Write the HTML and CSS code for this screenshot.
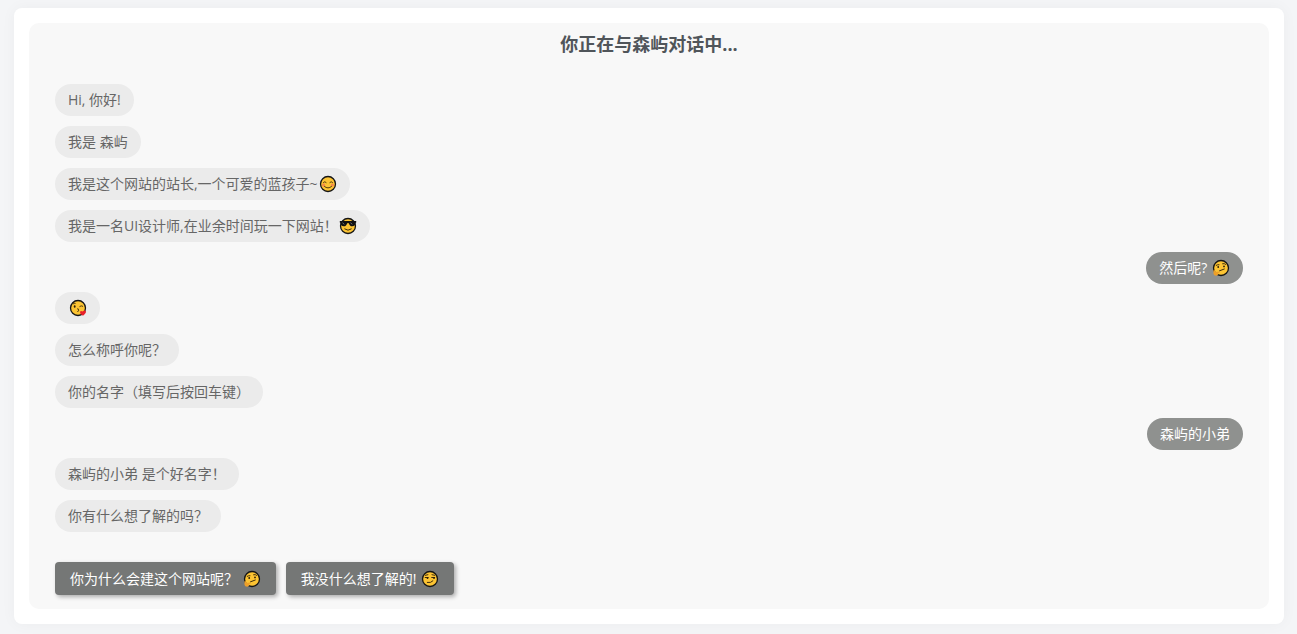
FILE: index.html
```html
<!DOCTYPE html>
<html lang="zh-CN">
<head>
<meta charset="utf-8">
<meta name="viewport" content="width=device-width, initial-scale=1">
<title>你正在与森屿对话中...</title>
<link rel="stylesheet" href="styles.css">
</head>
<body>
<svg class="sprite" aria-hidden="true">
  <symbol id="face" viewBox="0 0 18 18">
    <circle cx="9" cy="9" r="7.5" fill="#fcc433" stroke="#151515" stroke-width="1.3"/>
  </symbol>
  <symbol id="smile" viewBox="0 0 18 18">
    <use href="#face"/>
    <circle cx="4.6" cy="10" r="1.6" fill="#f7894a"/><circle cx="13.4" cy="10" r="1.6" fill="#f7894a"/>
    <path d="M4.4 7.5q1.4-1.8 2.8 0M10.8 7.5q1.4-1.8 2.8 0M5.5 11.5q3.5 3 7 0" fill="none" stroke="#3d2c0c" stroke-width=".9" stroke-linecap="round"/>
  </symbol>
  <symbol id="cool" viewBox="0 0 18 18">
    <use href="#face"/>
    <path d="M.8 4h16.4v1.6l-.8.4q-.2 3.3-3.2 3.3-2.7 0-3.3-3.1H8.1q-.6 3.1-3.3 3.1-3 0-3.2-3.3l-.8-.4z" fill="#111"/>
    <path d="M3.5 5.8l1.8 1.5M11.5 5.8l1.8 1.5" stroke="#888" stroke-width=".8"/>
    <path d="M5.7 12q3.3 2.6 6.6 0" fill="none" stroke="#3d2c0c" stroke-linecap="round"/>
  </symbol>
  <symbol id="think" viewBox="0 0 18 18">
    <use href="#face"/>
    <path d="M4.2 6.3q1.2-.8 2.8-.6M10.600 4.700q1.800-.6 3 .6M7.500 11.800l4.800-1.800" fill="none" stroke="#3d2c0c" stroke-linecap="round"/>
    <circle cx="6.2" cy="8" r=".9" fill="#2b1d08"/><circle cx="12" cy="7.4" r=".9" fill="#2b1d08"/>
    <path d="M1.5 11.3q1-.8 1.500.6l.6 1.100 3.600-.5q1 .2.4 1l-1.300.6q.2 2.400-1.900 2.600-2.500.1-2.900-1.900z" fill="#ee9f28"/>
  </symbol>
  <symbol id="kiss" viewBox="0 0 18 18">
    <use href="#face"/>
    <path d="M4.2 4.8q1-.8 2-.5M10.8 7.4q1.4-1.200 2.900-.2M8.500 9.800q2 .1.800 1.200 1.500.8-.6 1.500" fill="none" stroke="#3d2c0c" stroke-width=".9" stroke-linecap="round"/>
    <ellipse cx="5.7" cy="7.5" rx=".9" ry="1.2" fill="#2b1d08"/>
    <path d="M14 16.800q-3.300-1.800-3-3.700.6-1.800 2.500-.6 2-2 3.300-.4 1 1.800-2.800 4.700z" fill="#e8202a"/>
  </symbol>
  <symbol id="smirk" viewBox="0 0 18 18">
    <use href="#face"/>
    <path d="M4.3 5.3l2.6-.6M11 4.7l2.7.6M4.2 7.5h3M10.7 7.5h3M6.3 12.5q3.5.8 5.6-1.6" fill="none" stroke="#3d2c0c" stroke-linecap="round"/>
    <circle cx="6.5" cy="8" r=".9" fill="#2b1d08"/><circle cx="13" cy="8" r=".9" fill="#2b1d08"/>
  </symbol>
</svg>
<main class="card">
  <section class="chat">
    <h1 class="title">你正在与森屿对话中...</h1>
    <div class="messages">
      <div class="group">
        <p class="bubble">Hi, 你好!</p>
        <p class="bubble">我是 森屿</p>
        <p class="bubble">我是这个网站的站长,一个可爱的蓝孩子~<svg class="emoji" role="img" aria-label="微笑"><use href="#smile"/></svg></p>
        <p class="bubble">我是一名UI设计师,在业余时间玩一下网站！<svg class="emoji" role="img" aria-label="墨镜"><use href="#cool"/></svg></p>
        <p class="bubble reply">然后呢? <svg class="emoji" role="img" aria-label="思考"><use href="#think"/></svg></p>
      </div>
      <div class="group">
        <p class="bubble"><svg class="emoji" role="img" aria-label="飞吻"><use href="#kiss"/></svg></p>
        <p class="bubble">怎么称呼你呢？</p>
        <p class="bubble">你的名字（填写后按回车键）</p>
        <p class="bubble reply">森屿的小弟</p>
      </div>
      <div class="group">
        <p class="bubble">森屿的小弟 是个好名字！</p>
        <p class="bubble">你有什么想了解的吗？</p>
      </div>
    </div>
    <div class="choices">
      <button class="choice" type="button">你为什么会建这个网站呢？ <svg class="emoji" role="img" aria-label="思考"><use href="#think"/></svg></button>
      <button class="choice" type="button">我没什么想了解的! <svg class="emoji" role="img" aria-label="得意"><use href="#smirk"/></svg></button>
    </div>
  </section>
</main>
</body>
</html>
```
FILE: styles.css
```css
* {
  box-sizing: border-box;
}

body {
  margin: 0;
  padding: 8px 13px 10px 14px;
  background: #f4f5f7;
  color: #666;
  font: 400 14px/20px "Open Sans", "Noto Sans CJK SC", sans-serif;
}

.sprite {
  position: absolute;
  width: 0;
  height: 0;
}

.card {
  padding: 15px;
  border-radius: 8px;
  background: #fff;
  box-shadow: 0 0 15px rgba(0, 20, 40, 0.04);
}

.chat {
  padding: 8px 26px 14px;
  border-radius: 10px;
  background: #f8f8f8;
}

.title {
  margin: 0 0 27px;
  color: #50555a;
  font-size: 18px;
  font-weight: 700;
  line-height: 26px;
  text-align: center;
}

.messages {
  display: flex;
  flex-direction: column;
  gap: 8px;
}

.group {
  display: flex;
  flex-direction: column;
  align-items: flex-start;
  gap: 10px;
}

.bubble {
  display: flex;
  align-items: center;
  min-height: 32px;
  margin: 0;
  padding: 6px 13px;
  border-radius: 16px;
  background: #ebebeb;
  white-space: pre-wrap;
}

.reply {
  align-self: flex-end;
  background: #8f918f;
  color: #fff;
}

.emoji {
  flex: none;
  width: 18px;
  height: 18px;
  margin-left: 1px;
}

.choices {
  display: flex;
  flex-wrap: wrap;
  gap: 10px;
  margin-top: 30px;
}

.choice {
  display: flex;
  align-items: center;
  min-height: 33px;
  padding: 6px 15px;
  border: 0;
  border-radius: 4px;
  background: #757776;
  box-shadow: 2px 2px 4px rgba(0, 0, 0, 0.3);
  color: #fff;
  font: inherit;
  white-space: pre-wrap;
  cursor: pointer;
}
```
